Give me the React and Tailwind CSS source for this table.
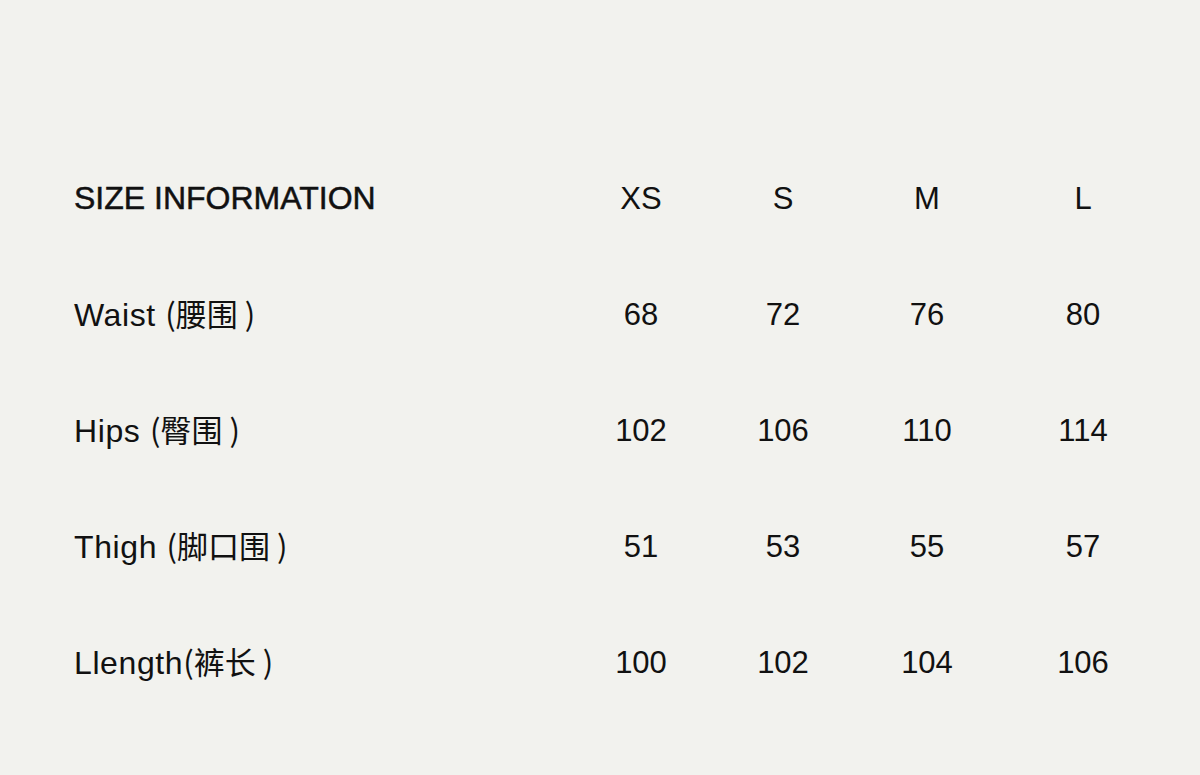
const sizes = ["XS", "S", "M", "L"];

const rows = [
  { name: "Waist ", zh: "腰围", values: ["68", "72", "76", "80"] },
  { name: "Hips ", zh: "臀围", values: ["102", "106", "110", "114"] },
  { name: "Thigh ", zh: "脚口围", values: ["51", "53", "55", "57"] },
  { name: "Llength", zh: "裤长", values: ["100", "102", "104", "106"] },
];

function Row({ children, values, head }) {
  return (
    <div className="grid h-[116px] grid-cols-[497px_140px_144px_144px_168px] items-center">
      <div className={head ? "text-[32px] [-webkit-text-stroke:0.5px_#111]" : "text-[32px] tracking-[0.6px]"}>{children}</div>
      {values.map((v, i) => (
        <div key={i} className="text-center text-[31px]">
          {v}
        </div>
      ))}
    </div>
  );
}

export default function App() {
  return (
    <div
      className="h-[775px] w-[1200px] bg-[#f2f2ee] pl-[74px] pt-[140px] text-[#111] leading-none"
      style={{ fontFamily: '"Liberation Sans", "Noto Sans CJK SC", sans-serif' }}
    >
      <Row values={sizes} head>
        SIZE INFORMATION
      </Row>
      {rows.map((r) => (
        <Row key={r.name} values={r.values}>
          {r.name}
          <span className="font-['Noto_Sans_CJK_SC',sans-serif] text-[31px] tracking-normal">
            ({r.zh}
            <span className="ml-[7px]">)</span>
          </span>
        </Row>
      ))}
    </div>
  );
}
